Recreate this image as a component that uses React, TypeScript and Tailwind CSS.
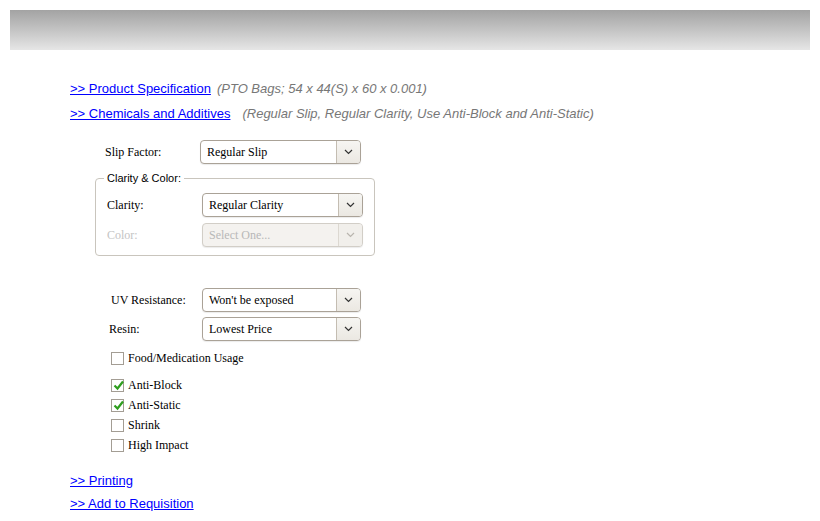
import React from 'react'

const serif = { fontFamily: '"Liberation Serif", "Times New Roman", serif' }

function Chevron({ muted }: { muted?: boolean }) {
  return (
    <svg width="9" height="6" viewBox="0 0 9 6" fill="none">
      <path d="M1 1l3.5 3.5L8 1" stroke={muted ? '#b9b5ae' : '#333'} strokeWidth="1.2" />
    </svg>
  )
}

function FakeSelect({ value, width, disabled }: { value: string; width: string; disabled?: boolean }) {
  return (
    <div
      className={`flex h-[24px] ${width} items-stretch rounded-[4px] border shadow-[0_1px_1px_rgba(0,0,0,0.08)] ${
        disabled ? 'border-[#d2cec7] bg-[#f4f2ef] text-[#b8b8b8]' : 'border-[#aaa297] bg-white text-black'
      }`}
    >
      <div className="flex flex-1 items-center pl-[6px] text-[12px]">{value}</div>
      <div
        className={`flex w-[24px] items-center justify-center rounded-r-[3px] border-l ${
          disabled ? 'border-[#dcd8d1] bg-[#f1efeb]' : 'border-[#c4bdb2] bg-gradient-to-b from-[#f6f5f2] to-[#ebe8e2]'
        }`}
      >
        <Chevron muted={disabled} />
      </div>
    </div>
  )
}

function Check({ label, checked }: { label: string; checked?: boolean }) {
  return (
    <div className="flex h-[20px] items-center pl-[16px]">
      <div className="relative h-[13px] w-[13px] border border-[#a39d94] bg-white">
        {checked && (
          <svg className="absolute left-[1px] top-[0px]" width="11" height="11" viewBox="0 0 11 11" fill="none">
            <path d="M1.5 5.5l3 3L10 1.5" stroke="#2f9e1f" strokeWidth="2.2" />
          </svg>
        )}
      </div>
      <span className="ml-[4px] text-[12px] text-black">{label}</span>
    </div>
  )
}

export default function App() {
  return (
    <div className="min-h-[521px] w-full bg-white" style={{ fontFamily: '"Liberation Sans", Arial, sans-serif' }}>
      <div className="mx-[10px] h-[50px] pt-[10px]">
        <div className="h-[40px] bg-gradient-to-b from-[#a3a3a3] to-[#e6e6e6]" />
      </div>

      <div className="mt-[26px] pl-[70px] text-[13px]">
        <div className="flex h-[25px] items-center">
          <a href="#" className="text-[#0000ff] underline">&gt;&gt; Product Specification</a>
          <span className="ml-[6px] italic text-[#777]">(PTO Bags; 54 x 44(S) x 60 x 0.001)</span>
        </div>
        <div className="flex h-[25px] items-center">
          <a href="#" className="text-[#0000ff] underline">&gt;&gt; Chemicals and Additives</a>
          <span className="ml-[12px] italic text-[#777]">(Regular Slip, Regular Clarity, Use Anti-Block and Anti-Static)</span>
        </div>
      </div>

      <div className="ml-[95px] w-[280px]" style={serif}>
        <div className="mt-[14px] flex items-center pl-[10px]">
          <span className="w-[95px] text-[12px]">Slip Factor:</span>
          <FakeSelect value="Regular Slip" width="w-[161px]" />
        </div>

        <fieldset className="mt-[8px] rounded-[4px] border border-[#c9c5bd] pb-[8px] pl-[11px]">
          <legend
            className="ml-[-3px] px-[3px] text-[11px] leading-[13px] text-black"
            style={{ fontFamily: '"Liberation Sans", Arial, sans-serif' }}
          >
            Clarity &amp; Color:
          </legend>
          <div className="mt-[8px] flex items-center">
            <span className="w-[95px] text-[12px]">Clarity:</span>
            <FakeSelect value="Regular Clarity" width="w-[161px]" />
          </div>
          <div className="mt-[6px] flex items-center">
            <span className="w-[95px] text-[12px] text-[#c4c4c4]">Color:</span>
            <FakeSelect value="Select One..." width="w-[161px]" disabled />
          </div>
        </fieldset>

        <div className="mt-[32px] flex items-center pl-[16px]">
          <span className="w-[91px] text-[12px]">UV Resistance:</span>
          <FakeSelect value="Won't be exposed" width="w-[159px]" />
        </div>
        <div className="mt-[5px] flex items-center pl-[14px]">
          <span className="w-[93px] text-[12px]">Resin:</span>
          <FakeSelect value="Lowest Price" width="w-[159px]" />
        </div>

        <div className="mt-[7px]">
          <Check label="Food/Medication Usage" />
        </div>
        <div className="mt-[7px]">
          <Check label="Anti-Block" checked />
          <Check label="Anti-Static" checked />
          <Check label="Shrink" />
          <Check label="High Impact" />
        </div>
      </div>

      <div className="mt-[14px] pl-[70px] text-[13px]">
        <div className="flex h-[23px] items-center">
          <a href="#" className="text-[#0000ff] underline">&gt;&gt; Printing</a>
        </div>
        <div className="flex h-[23px] items-center">
          <a href="#" className="text-[#0000ff] underline">&gt;&gt; Add to Requisition</a>
        </div>
      </div>
    </div>
  )
}
